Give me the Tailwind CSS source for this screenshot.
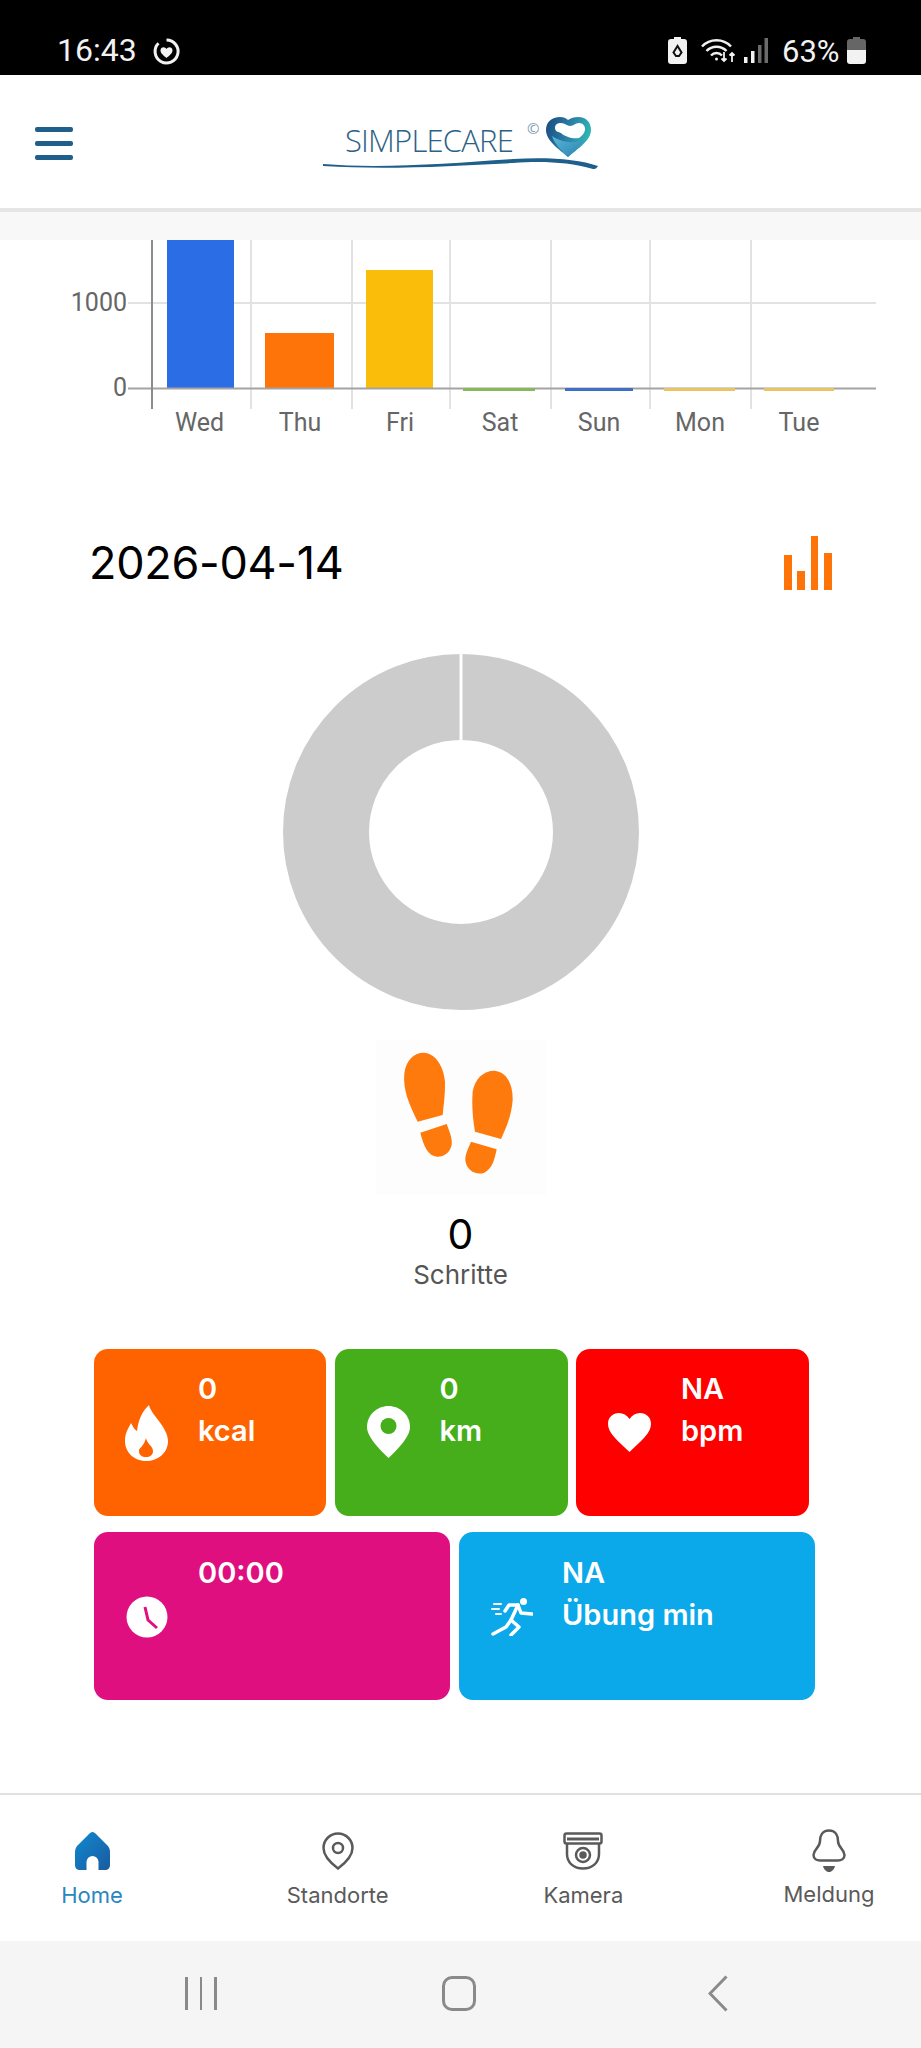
<!DOCTYPE html>
<html lang="de">
<head>
<meta charset="UTF-8">
<meta name="viewport" content="width=device-width, initial-scale=1.0">
<title>SimpleCare</title>
<script src="https://cdn.jsdelivr.net/npm/@tailwindcss/browser@4"></script>
</head>
<body class="bg-white font-['Inter',sans-serif]">
<div class="w-[921px] h-[2048px] flex flex-col overflow-hidden">

  <!-- status bar -->
  <div class="h-[75px] shrink-0 bg-black text-[#f2f2f2] relative">
    <span class="absolute left-[57px] top-[31px] text-[32px] leading-[38px] font-['Roboto',sans-serif]">16:43</span>
    <svg class="absolute left-[152px] top-[37px]" width="29" height="29" viewBox="0 0 29 29" fill="none">
      <path d="M14.5 3a11.5 11.5 0 1 1-8 3.3" stroke="#f2f2f2" stroke-width="3"/>
      <path d="M14.5 21c-3-2.500-6-4.700-6-7.500 0-2 1.500-3.200 3-3.200 1.300 0 2.300.7 3 1.800.7-1.100 1.700-1.800 3-1.800 1.500 0 3 1.200 3 3.200 0 2.800-3 5-6 7.500z" fill="#f2f2f2"/>
    </svg>
    <svg class="absolute left-[668px] top-[37px]" width="19" height="27" viewBox="0 0 19 27">
      <path d="M6 0h7v2h3a3 3 0 0 1 3 3v19a3 3 0 0 1-3 3H3a3 3 0 0 1-3-3V5a3 3 0 0 1 3-3h3z" fill="#f2f2f2"/>
      <path d="M9.500 9l-4 6.500 2.500 3.500h3l2.500-3.500z" fill="none" stroke="#111" stroke-width="2"/>
    </svg>
    <svg class="absolute left-[701px] top-[38px]" width="35" height="25" viewBox="0 0 35 25" fill="none" stroke="#f2f2f2" stroke-width="2.500">
      <path d="M1 8.500a20 20 0 0 1 29 0"/>
      <path d="M5.500 13a14 14 0 0 1 20 0"/>
      <path d="M10 17.500a7.500 7.500 0 0 1 11 0"/>
      <circle cx="15.500" cy="21" r="1.500" fill="#f2f2f2" stroke="none"/>
      <path d="M23 14v9m-2.500-2.500 2.500 2.500 2.500-2.500M31 24v-9m-2.500 2.500 2.500-2.500 2.500 2.500" stroke-width="1.800"/>
    </svg>
    <svg class="absolute left-[744px] top-[38px]" width="24" height="25" viewBox="0 0 24 25">
      <rect x="0" y="19" width="3.500" height="6" fill="#f2f2f2"/>
      <rect x="7" y="13" width="3.500" height="12" fill="#f2f2f2"/>
      <rect x="14" y="7" width="3.500" height="18" fill="#6b6b6b"/>
      <rect x="20.500" y="0" width="3.500" height="25" fill="#6b6b6b"/>
    </svg>
    <span class="absolute left-[782px] top-[33px] text-[31px] leading-[37px] font-['Roboto',sans-serif]">63%</span>
    <svg class="absolute left-[847px] top-[37px]" width="19" height="27" viewBox="0 0 19 27">
      <path d="M6 0h7v2h3a3 3 0 0 1 3 3v8H0V5a3 3 0 0 1 3-3h3z" fill="#666"/>
      <path d="M0 13h19v11a3 3 0 0 1-3 3H3a3 3 0 0 1-3-3z" fill="#f2f2f2"/>
    </svg>
  </div>

  <!-- app header -->
  <header class="h-[133px] shrink-0 bg-white relative">
    <div class="absolute left-[35px] top-[52px] w-[38px] flex flex-col gap-[9px]">
      <div class="h-[5px] rounded-[2px] bg-[#1f5f8b]"></div>
      <div class="h-[5px] rounded-[2px] bg-[#1f5f8b]"></div>
      <div class="h-[5px] rounded-[2px] bg-[#1f5f8b]"></div>
    </div>
    <span class="absolute left-[345px] top-[45px] text-[31px] leading-[40px] text-[#2d6185] font-['Open_Sans',sans-serif] font-light tracking-[-0.8px]">SIMPLECARE</span>
    <span class="absolute left-[527px] top-[44px] text-[15px] leading-[18px] text-[#7d97aa] font-['Open_Sans',sans-serif]">©</span>
    <svg class="absolute left-[323px] top-[40px]" width="276" height="54" viewBox="0 0 276 54">
      <defs>
        <linearGradient id="lg1" x1="0" y1="0" x2="1" y2="0.300">
          <stop offset="0" stop-color="#174a7c"/><stop offset="0.550" stop-color="#2c7ea6"/><stop offset="1" stop-color="#2fb5b5"/>
        </linearGradient>
        <linearGradient id="lg2" x1="0" y1="0" x2="1" y2="1">
          <stop offset="0" stop-color="#58b9d8"/><stop offset="1" stop-color="#2b7fb0"/>
        </linearGradient>
      </defs>
      <path d="M0 49c60 5 130-1 190-5 35-2 65 0 85 7-2 3-3 3-5 3-25-7-50-8-80-6-60 3-125 7-190 3z" fill="#1f5f8b"/>
      <path d="M245 42c-8-7-22-16-22-27 0-8 6-13 14-13 3.500 0 6 1 8 3 3-2 6-3 10-3 9 0 13 6 13 13 0 11-15 20-23 27z" fill="url(#lg1)"/>
      <path d="M232 13c0-4 3-5 6-5 4 0 6 3 9 3 4 0 5-3 9-3 4 0 6 3 6 6 0 4-3 7-6 9-6 1-14-1-18-5-2-1-6-1-6-5z" fill="#fff"/>
      <path d="M229 21c8 6 24 9 33 3-4 7-11 13-17 18-6-6-13-12-16-21z" fill="url(#lg2)"/>
    </svg>
  </header>

  <div class="h-[4px] shrink-0 bg-[#e5e5e5]"></div>
  <div class="h-[28px] shrink-0 bg-[#f8f8f8]"></div>

  <main class="flex-1 flex flex-col">
    <!-- weekly chart -->
    <svg class="block shrink-0" width="921" height="200" viewBox="0 240 921 200" font-family="Roboto, sans-serif" font-size="25" fill="#666">
      <g stroke="#e2e2e2" stroke-width="2">
        <line x1="128" y1="303" x2="876" y2="303"/>
        <line x1="251" y1="240" x2="251" y2="409"/>
        <line x1="352" y1="240" x2="352" y2="409"/>
        <line x1="450" y1="240" x2="450" y2="409"/>
        <line x1="551" y1="240" x2="551" y2="409"/>
        <line x1="650" y1="240" x2="650" y2="409"/>
        <line x1="751" y1="240" x2="751" y2="409"/>
      </g>
      <rect x="167" y="240" width="67" height="148" fill="#2a6de4"/>
      <rect x="265" y="333" width="69" height="55" fill="#ff7409"/>
      <rect x="366" y="270" width="67" height="118" fill="#fabd0a"/>
      <line x1="128" y1="388.500" x2="876" y2="388.500" stroke="#a3a3a3" stroke-width="2"/>
      <line x1="152" y1="240" x2="152" y2="409" stroke="#8c8c8c" stroke-width="2"/>
      <rect x="463" y="388" width="72" height="3" fill="#86b85c"/>
      <rect x="565" y="388" width="68" height="3" fill="#3e6fc4"/>
      <rect x="664" y="388" width="71" height="3" fill="#e9c462"/>
      <rect x="764" y="388" width="70" height="3" fill="#e9c462"/>
      <text x="127" y="311" text-anchor="end">1000</text>
      <text x="127" y="396" text-anchor="end">0</text>
      <text x="199.500" y="431" text-anchor="middle">Wed</text>
      <text x="300" y="431" text-anchor="middle">Thu</text>
      <text x="400" y="431" text-anchor="middle">Fri</text>
      <text x="500" y="431" text-anchor="middle">Sat</text>
      <text x="599" y="431" text-anchor="middle">Sun</text>
      <text x="700" y="431" text-anchor="middle">Mon</text>
      <text x="799" y="431" text-anchor="middle">Tue</text>
    </svg>

    <!-- date row -->
    <div class="mt-[93px] h-[60px] flex items-center justify-between pl-[89px] pr-[89px]">
      <span class="text-[45px] leading-[60px] text-black tracking-[-0.3px]">2026-04-14</span>
      <svg width="48" height="54" viewBox="0 0 48 54" fill="#ff7409">
        <rect x="0" y="19" width="8" height="35"/>
        <rect x="13" y="35" width="8" height="19"/>
        <rect x="27" y="0" width="7" height="54"/>
        <rect x="40" y="17" width="8" height="37"/>
      </svg>
    </div>

    <!-- donut -->
    <div class="mt-[61px] flex justify-center">
      <svg width="356" height="356" viewBox="0 0 356 356">
        <circle cx="178" cy="178" r="135" fill="none" stroke="#cccccc" stroke-width="86"/>
        <line x1="178" y1="0" x2="178" y2="86" stroke="#fff" stroke-width="3"/>
      </svg>
    </div>

    <!-- steps -->
    <div class="mt-[30px] flex flex-col items-center">
      <div class="w-[170px] h-[155px] bg-[#fdfdfd]">
        <svg width="170" height="155" viewBox="75 65 510 465" fill="#ff7a0d">
          <path d="M200 310C175 260 155 215 160 165C165 125 190 103 218 103C255 105 278 145 282 190C283 225 278 260 275 290Z"/>
          <path d="M208 343L287 317C295 340 305 360 302 380C296 405 278 416 258 415C232 413 218 385 208 343Z"/>
          <path d="M450 362L372 340C365 300 362 260 365 220C372 180 398 157 430 157C465 160 486 195 485 245C482 290 465 330 450 362Z"/>
          <path d="M360 370L437 393C430 425 425 450 400 463C375 473 345 455 343 425C343 405 352 390 360 370Z"/>
        </svg>
      </div>
      <div class="mt-[16px] text-[41px] leading-[46px] text-black">0</div>
      <div class="text-[26px] leading-[36px] text-[#555]">Schritte</div>
    </div>

    <!-- tiles -->
    <div class="mt-[56px] pl-[94px] flex flex-col gap-[16px] text-white font-semibold text-[29px] leading-[42px]">
      <div class="flex gap-[8.500px]">
        <div class="w-[232px] h-[167px] rounded-[14px] bg-[#ff6300] flex pl-[31px] pt-[19px]">
          <svg class="mt-[37px] shrink-0" width="43" height="56" viewBox="0 0 43 56">
            <path d="M24 0C26 10 43 22 43 36C43 48 33 56 21 56C9 56 0 47 0 36C0 28 3 24 6 18C8 22 10 25 12 26C13 16 17 6 24 0Z" fill="#fff"/>
            <path d="M21 33C22 39 28 41 28 46C28 50 25 52 21 52C17 52 14 50 14 46C14 43 16 43 17 41C19 39 20 36 21 33Z" fill="#ff6300"/>
          </svg>
          <div class="ml-[30px]">0<br>kcal</div>
        </div>
        <div class="w-[233px] h-[167px] rounded-[14px] bg-[#46ae1b] flex pl-[32px] pt-[19px]">
          <svg class="mt-[38px] shrink-0" width="43" height="52" viewBox="0 0 43 52">
            <path d="M21.500 0C33 0 43 9 43 21C43 31 30 44 21.500 52C13 44 0 31 0 21C0 9 10 0 21.500 0Z" fill="#fff"/>
            <circle cx="21.500" cy="20" r="8" fill="#46ae1b"/>
          </svg>
          <div class="ml-[30px]">0<br>km</div>
        </div>
        <div class="w-[233px] h-[167px] rounded-[14px] bg-[#ff0000] flex pl-[32px] pt-[19px]">
          <svg class="mt-[45px] shrink-0" width="43" height="39" viewBox="0 0 43 39">
            <path d="M21.500 39C10 28 0 20 0 11C0 4 5 0 11 0C15 0 19 2 21.500 6C24 2 28 0 32 0C38 0 43 4 43 11C43 20 33 28 21.500 39Z" fill="#fff"/>
          </svg>
          <div class="ml-[30px]">NA<br>bpm</div>
        </div>
      </div>
      <div class="flex gap-[9px]">
        <div class="w-[356px] h-[168px] rounded-[14px] bg-[#e00f80] flex pl-[32px] pt-[20px]">
          <svg class="mt-[44px] shrink-0" width="42" height="42" viewBox="0 0 42 42" fill="none">
            <circle cx="21" cy="21" r="20.500" fill="#fff"/>
            <path d="M19 11L22 24L31 32" stroke="#e00f80" stroke-width="3"/>
          </svg>
          <div class="ml-[30px]">00:00</div>
        </div>
        <div class="w-[356px] h-[168px] rounded-[14px] bg-[#0ba9ea] flex pl-[32px] pt-[20px]">
          <svg class="mt-[46px] shrink-0" width="42" height="38" viewBox="0 0 42 38" fill="none" stroke="#fff" stroke-width="3.500" stroke-linecap="round" stroke-linejoin="round">
            <circle cx="32.500" cy="3.500" r="3.500" fill="#fff" stroke="none"/>
            <path d="M27 7L20 22L15 29L2 36"/>
            <path d="M20 22L28 29L20 37"/>
            <path d="M27 7L30 15L41 16"/>
            <path d="M27 7L18 7L14 13"/>
            <path d="M3 6H10M1 11H8M5 16H10" stroke-width="2"/>
          </svg>
          <div class="ml-[29px]">NA<br>Übung min</div>
        </div>
      </div>
    </div>
  </main>

  <!-- bottom tabs -->
  <nav class="h-[148px] shrink-0 border-t-[2px] border-[#e0e0e0] bg-white flex justify-between text-[22px] leading-[30px] text-[#5a5a5a]">
    <div class="w-[184px] flex flex-col items-center">
      <svg class="mt-[37px]" width="35" height="38" viewBox="0 0 35 38">
        <defs>
          <linearGradient id="home" x1="0" y1="0" x2="1" y2="1">
            <stop offset="0" stop-color="#0f8ad0"/><stop offset="1" stop-color="#1b5aa0"/>
          </linearGradient>
        </defs>
        <path d="M17.500 0C19 0 20 1 21 2L32 13C34 15 35 17 35 20V33C35 36 33 38 30 38H23.500V30A6 6 0 0 0 11.500 30V38H5C2 38 0 36 0 33V20C0 17 1 15 3 13L14 2C15 1 16 0 17.500 0Z" fill="url(#home)"/>
      </svg>
      <span class="mt-[10px] text-[#2a86bd]">Home</span>
    </div>
    <div class="w-[184px] flex flex-col items-center">
      <svg class="mt-[37px]" width="32" height="38" viewBox="0 0 32 38" fill="none" stroke="#5a5a5a" stroke-width="2.500">
        <path d="M16 1.500C24 1.500 30.500 8 30.500 16C30.500 24 22 32 16 36.500C10 32 1.500 24 1.500 16C1.500 8 8 1.500 16 1.500Z"/>
        <circle cx="16" cy="16" r="5"/>
      </svg>
      <span class="mt-[10px]">Standorte</span>
    </div>
    <div class="w-[184px] flex flex-col items-center">
      <svg class="mt-[37px]" width="40" height="38" viewBox="0 0 40 38" fill="none" stroke="#5a5a5a" stroke-width="2.500">
        <rect x="1.500" y="1.500" width="37" height="10" rx="2"/>
        <path d="M4 12V22C4 31 11 36.500 20 36.500C29 36.500 36 31 36 22V12"/>
        <circle cx="20" cy="23" r="7"/>
        <circle cx="20" cy="23" r="2.500" fill="#5a5a5a"/>
        <path d="M4 7H36" stroke-width="3"/>
      </svg>
      <span class="mt-[10px]">Kamera</span>
    </div>
    <div class="w-[184px] flex flex-col items-center">
      <svg class="mt-[34px]" width="34" height="43" viewBox="0 0 34 43" fill="none" stroke="#5a5a5a" stroke-width="2.500">
        <path d="M17 1.500C24 1.500 26 7 26 12C26 19 32.500 20 32.500 26C32.500 30 29 31.500 26 31.500H8C5 31.500 1.500 30 1.500 26C1.500 20 8 19 8 12C8 7 10 1.500 17 1.500Z"/>
        <path d="M11 37H23C22 41 19 43 17 43C15 43 12 41 11 37Z" fill="#5a5a5a" stroke="none"/>
      </svg>
      <span class="mt-[7px]">Meldung</span>
    </div>
  </nav>

  <!-- android nav -->
  <div class="h-[107px] shrink-0 bg-[#f5f5f5] relative">
    <div class="absolute left-[185px] top-[36px] h-[33px] flex gap-[12px]">
      <div class="w-[2.500px] bg-[#8a8a8a]"></div>
      <div class="w-[2.500px] bg-[#8a8a8a]"></div>
      <div class="w-[2.500px] bg-[#8a8a8a]"></div>
    </div>
    <div class="absolute left-[442px] top-[35px] w-[34px] h-[35px] rounded-[10px] border-[3px] border-[#8a8a8a]"></div>
    <svg class="absolute left-[708px] top-[34px]" width="20" height="37" viewBox="0 0 20 37" fill="none" stroke="#8a8a8a" stroke-width="3">
      <path d="M18.500 1.500L2 18.500L18.500 35.500"/>
    </svg>
  </div>
</div>
</body>
</html>
